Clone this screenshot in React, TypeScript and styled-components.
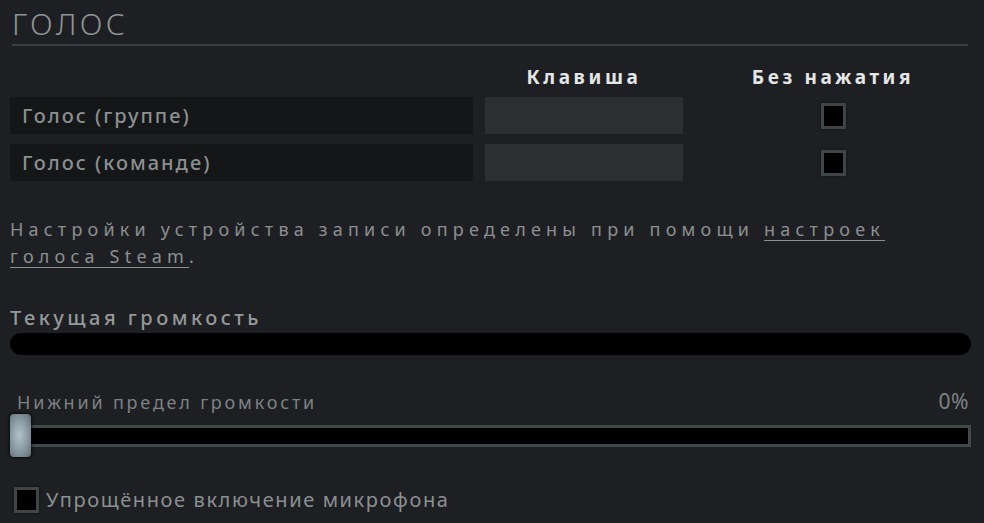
import * as React from 'react';
import styled, {createGlobalStyle} from 'styled-components';

const GlobalStyle = createGlobalStyle`
	html, body {
		margin: 0;
		padding: 0;
		background: #1e1f22;
	}
	body {
		font-family: 'Noto Sans', 'Open Sans', sans-serif;
		color: #8a9091;
	}
`;

const Page: any = styled.div`
	width: 984px;
	height: 523px;
	box-sizing: border-box;
	padding: 0 13px 0 10px;
	overflow: hidden;
`;

const SectionHead: any = styled.div`
	padding: 6px 3px 0 2px;
`;

const Title: any = styled.div`
	font-size: 30px;
	font-weight: 300;
	letter-spacing: 3.4px;
	line-height: 36px;
	color: #8e9596;
`;

const Divider: any = styled.div`
	height: 2px;
	margin-top: 2px;
	background: #3b3f42;
`;

const BindTable: any = styled.div`
	display: grid;
	grid-template-columns: 463px 198px 1fr;
	column-gap: 12px;
	row-gap: 10px;
	margin-top: 19px;
`;

const ColHead: any = styled.div`
	text-align: center;
	font-size: 19px;
	font-weight: 700;
	letter-spacing: 3.6px;
	line-height: 24px;
	color: #e4e6e6;
	margin-bottom: -2px;
`;

const LabelCell: any = styled.div`
	height: 37px;
	display: flex;
	align-items: center;
	padding-left: 12px;
	background: #141617;
	font-size: 20px;
	font-weight: 500;
	letter-spacing: 2px;
	color: #8a9091;
`;

const KeyCell: any = styled.div`
	height: 37px;
	background: #2b2f31;
`;

const CheckCell: any = styled.div`
	display: flex;
	align-items: center;
	justify-content: center;
`;

const Box: any = styled.div`
	width: 19px;
	height: 20px;
	flex: none;
	background: #000;
	border: 3px solid #3f4547;
	box-shadow: 0 0 3px rgba(0, 0, 0, 0.5);
`;

const Note: any = styled.p`
	margin: 35px 0 0;
	font-size: 18px;
	line-height: 27px;
	letter-spacing: 5.2px;
	color: #8a9091;
`;

const Link: any = styled.a`
	color: #8a9091;
	text-decoration: underline;
	text-underline-offset: 4px;
	text-decoration-thickness: 1px;
`;

const MeterLabel: any = styled.div`
	margin-top: 36px;
	font-size: 20px;
	font-weight: 500;
	letter-spacing: 3.5px;
	line-height: 24px;
	color: #949a9b;
`;

const Meter: any = styled.div`
	margin-top: 3px;
	height: 22px;
	border-radius: 11px;
	background: #000;
`;

const SliderHead: any = styled.div`
	display: flex;
	justify-content: space-between;
	align-items: baseline;
	height: 24px;
	margin-top: 34px;
	padding: 0 2px 0 7px;
	font-size: 18px;
	letter-spacing: 2.8px;
	line-height: 24px;
	color: #7d8384;
`;

const Percent: any = styled.span`
	font-size: 21px;
	letter-spacing: 0.5px;
`;

const Slider: any = styled.div`
	position: relative;
	margin-top: 12px;
	height: 22px;
	box-sizing: border-box;
	border: 3px solid #43494b;
	background: #000;
`;

const Thumb: any = styled.div`
	position: absolute;
	left: -3px;
	top: -14px;
	width: 21px;
	height: 43px;
	border-radius: 4px;
	background: radial-gradient(ellipse at 45% 50%, #b3c2ca 0%, #8797a0 55%, #5f6d75 100%);
	box-shadow: 0 0 3px 1px rgba(0, 0, 0, 0.7);
`;

const Toggle: any = styled.label`
	display: flex;
	align-items: center;
	gap: 7px;
	margin-top: 40px;
	padding-left: 4px;
	font-size: 20px;
	line-height: 26px;
	letter-spacing: 1.6px;
	color: #8a9091;
`;

const binds = ['Голос (группе)', 'Голос (команде)'];

const App: React.FC = () => {
	return (
		<Page>
			<GlobalStyle />
			<SectionHead>
				<Title>ГОЛОС</Title>
				<Divider />
			</SectionHead>
			<BindTable>
				<div />
				<ColHead>Клавиша</ColHead>
				<ColHead>Без нажатия</ColHead>
				{binds.map((name: string) => (
					<React.Fragment key={name}>
						<LabelCell>{name}</LabelCell>
						<KeyCell />
						<CheckCell>
							<Box />
						</CheckCell>
					</React.Fragment>
				))}
			</BindTable>
			<Note>
				Настройки устройства записи определены при помощи <Link>настроек голоса Steam</Link>.
			</Note>
			<MeterLabel>Текущая громкость</MeterLabel>
			<Meter />
			<SliderHead>
				<span>Нижний предел громкости</span>
				<Percent>0%</Percent>
			</SliderHead>
			<Slider>
				<Thumb />
			</Slider>
			<Toggle>
				<Box />
				Упрощённое включение микрофона
			</Toggle>
		</Page>
	);
};

export default App;
